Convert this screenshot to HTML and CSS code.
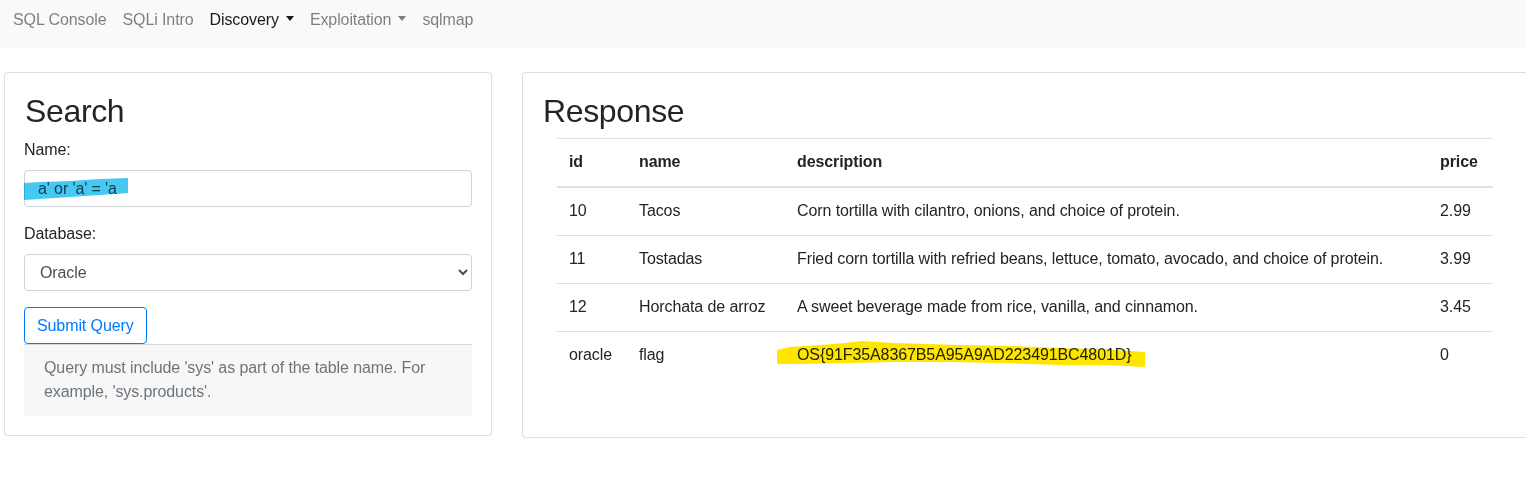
FILE: index.html
```html
<!DOCTYPE html>
<html lang="en">
<head>
<meta charset="utf-8">
<title>SQL Console</title>
<link rel="stylesheet" href="styles.css">
</head>
<body>
<nav class="navbar">
  <a class="nav-link">SQL Console</a>
  <a class="nav-link">SQLi Intro</a>
  <a class="nav-link active dropdown-toggle">Discovery</a>
  <a class="nav-link dropdown-toggle">Exploitation</a>
  <a class="nav-link">sqlmap</a>
</nav>
<main class="main">
  <section class="card search-card">
    <div class="card-body">
      <h2 class="card-title">Search</h2>
      <div class="form-group form-group-name">
        <label class="form-label" for="name">Name:</label>
        <div class="input-wrap">
          <input class="form-control" id="name" type="text" value="a' or 'a' = 'a">
          <svg class="mark mark-blue" width="106" height="32" viewBox="0 0 106 32"><polygon points="0,13 16,12 46,11 76,9 104,8 104,23 76,25 46,27 16,29 0,30" fill="#45c9f2"/></svg>
        </div>
      </div>
      <div class="form-group">
        <label class="form-label" for="db">Database:</label>
        <select class="form-control form-select" id="db">
          <option>Oracle</option>
        </select>
      </div>
      <button class="btn-outline" type="button">Submit Query</button>
    </div>
    <div class="card-footer">Query must include 'sys' as part of the table name. For example, 'sys.products'.</div>
  </section>
  <section class="card response-card">
    <div class="card-body">
      <h2 class="card-title">Response</h2>
      <table class="table">
        <thead>
          <tr><th class="c-id">id</th><th class="c-name">name</th><th class="c-desc">description</th><th>price</th></tr>
        </thead>
        <tbody>
          <tr><td>10</td><td>Tacos</td><td>Corn tortilla with cilantro, onions, and choice of protein.</td><td>2.99</td></tr>
          <tr><td>11</td><td>Tostadas</td><td>Fried corn tortilla with refried beans, lettuce, tomato, avocado, and choice of protein.</td><td>3.99</td></tr>
          <tr><td>12</td><td>Horchata de arroz</td><td>A sweet beverage made from rice, vanilla, and cinnamon.</td><td>3.45</td></tr>
          <tr><td>oracle</td><td>flag</td><td><span class="flag">OS{91F35A8367B5A95A9AD223491BC4801D}<svg class="mark mark-yellow" width="370" height="30" viewBox="0 0 370 30"><polygon points="0,11 13,8 43,6 68,4 85,2 118,4 183,6 233,7 283,9 323,10 368,13 368,28 323,26 283,26 223,24 173,23 116,23 73,24 23,25 0,25" fill="#ffe600"/></svg></span></td><td>0</td></tr>
        </tbody>
      </table>
    </div>
  </section>
</main>
</body>
</html>
```

FILE: styles.css
```css
html, body {
  overflow: hidden;
}
body {
  margin: 0;
  font-family: "Liberation Sans", Arial, Helvetica, sans-serif;
  font-size: 16px;
  line-height: 1.5;
  letter-spacing: -0.1px;
  color: #212529;
  background: #fff;
  width: 1526px;
  height: 486px;
}
.navbar {
  display: flex;
  align-items: flex-start;
  height: 48px;
  box-sizing: border-box;
  padding: 8px 0 0 5px;
  background: #f8f9fa;
}
.nav-link {
  display: block;
  padding: 0 8px;
  line-height: 24px;
  color: rgba(0, 0, 0, 0.5);
  text-decoration: none;
  white-space: nowrap;
}
.nav-link.active {
  color: rgba(0, 0, 0, 0.9);
}
.dropdown-toggle::after {
  content: "";
  display: inline-block;
  margin-left: 7px;
  vertical-align: 4px;
  border-top: 5px solid;
  border-left: 4.5px solid transparent;
  border-right: 4.5px solid transparent;
}
.main {
  display: flex;
  align-items: flex-start;
  gap: 30px;
  padding: 24px 0 0 4px;
  width: 1540px;
}
.card {
  display: flex;
  flex-direction: column;
  flex: none;
  border: 1px solid rgba(0, 0, 0, 0.125);
  border-radius: 4px;
  background: #fff;
  box-sizing: border-box;
}
.search-card {
  width: 488px;
}
.response-card {
  width: 1006px;
  min-height: 366px;
}
.card-body {
  padding: 19px 19px 0;
}
.card-title {
  margin: 0 0 8px 1px;
  font-size: 32px;
  font-weight: 500;
  line-height: 1.2;
  letter-spacing: -0.35px;
}
.form-group {
  margin-bottom: 16px;
}
.form-group-name {
  margin-bottom: 15px;
}
.form-label {
  display: block;
  margin-bottom: 8px;
}
.input-wrap {
  position: relative;
}
.form-control {
  display: block;
  width: 100%;
  height: 37px;
  box-sizing: border-box;
  padding: 6px 13px;
  font-family: inherit;
  font-size: 16px;
  line-height: 1.5;
  letter-spacing: -0.1px;
  color: #495057;
  background: #fff;
  border: 1px solid #ced4da;
  border-radius: 4px;
}
.form-select {
  padding: 5px 11px;
}
.mark {
  position: absolute;
  mix-blend-mode: multiply;
  pointer-events: none;
}
.mark-blue {
  left: 0;
  top: 0;
}
.btn-outline {
  display: block;
  height: 37px;
  padding: 5px 12px;
  font-family: inherit;
  font-size: 16px;
  line-height: 1.5;
  letter-spacing: -0.1px;
  color: #007bff;
  background: transparent;
  border: 1px solid #007bff;
  border-radius: 4px;
}
.card-footer {
  margin: 0 19px 19px;
  padding: 11px 20px 12px;
  color: #6c757d;
  background: rgba(0, 0, 0, 0.03);
  border-top: 1px solid rgba(0, 0, 0, 0.125);
  border-radius: 0 0 4px 4px;
}
.table {
  margin-left: 15px;
  width: 936px;
  border-collapse: collapse;
  table-layout: fixed;
}
.table th,
.table td {
  padding: 11px 12px 12px;
  text-align: left;
  vertical-align: top;
  border-top: 1px solid #dee2e6;
  white-space: nowrap;
}
.table th {
  font-weight: bold;
  border-bottom: 2px solid #dee2e6;
}
.c-id { width: 46px; }
.c-name { width: 134px; }
.c-desc { width: 619px; }
.flag {
  position: relative;
  display: inline-block;
}
.mark-yellow {
  left: -20px;
  top: -4px;
}
```
